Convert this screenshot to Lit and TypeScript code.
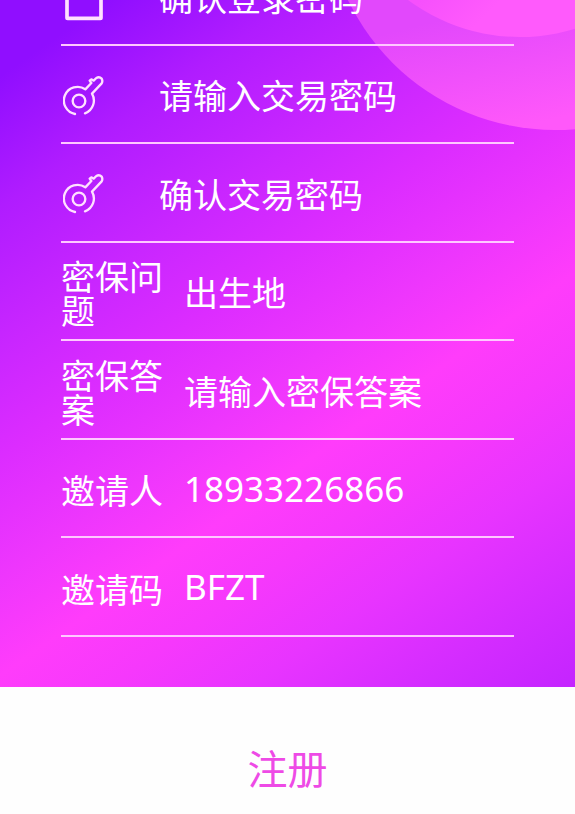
import { LitElement, html, svg, css } from "lit";
import { customElement } from "lit/decorators.js";

const lockIcon = svg`<rect x="12" y="42" width="102" height="85" rx="2" stroke-width="11" />
  <path d="M34 42V28a29 29 0 0 1 58 0V42" stroke-width="8" />`;

const keyIcon = svg`<g stroke-width="7" stroke-linecap="round" stroke-linejoin="round">
  <circle cx="48" cy="78" r="19" />
  <path d="M36 117A41 41 0 1 1 67 43L85 24L80 17L85 13L92 17L100 9Q109 4 116 11Q120 18 116 25L87 56A41 41 0 0 1 66 115" />
</g>`;

@customElement("app-root")
export class AppRoot extends LitElement {
  static styles = css`
    :host {
      display: block;
      min-height: 100vh;
      background: #fefefe;
      color: #fff;
      font-family: "Noto Sans", "Noto Sans CJK SC", sans-serif;
    }
    .panel {
      position: relative;
      overflow: hidden;
      padding: 0 61px 50px;
      background: linear-gradient(
        145deg,
        #900eff 0%,
        #900eff 7%,
        #b01cff 19%,
        #c926ff 32%,
        #dc2cff 42%,
        #ee36fd 53%,
        #ff3cfb 62%,
        #f638fc 70%,
        #e834ff 79%,
        #d42cff 90%,
        #c424ff 100%
      );
    }
    .circles {
      position: absolute;
      top: 0;
      right: 0;
      width: 235px;
      height: 140px;
    }
    .fields {
      position: relative;
      display: grid;
      grid-template-columns: minmax(0, 1fr);
      grid-auto-rows: 1fr;
      min-height: 690px;
      margin-top: -53px;
    }
    .row {
      box-sizing: border-box;
      display: flex;
      align-items: center;
      gap: 20px;
      padding-top: 4px;
      border-bottom: 2px solid #ffc8ff;
    }
    .label {
      flex: none;
      width: 103px;
      font-size: 34px;
      line-height: 34px;
      font-family: "Noto Sans CJK SC", sans-serif;
    }
    .label.symbol {
      width: 78px;
    }
    .icon {
      display: block;
      width: 42px;
      height: 46px;
      margin: 4px 0 0 2px;
      fill: none;
      stroke: #ffe0ff;
    }
    .control {
      box-sizing: border-box;
      flex: 1;
      min-width: 0;
      height: 56px;
      padding: 0 0 2px;
      border: 0;
      outline: 0;
      background: none;
      color: inherit;
      font-family: "Noto Sans CJK SC", sans-serif;
      font-size: 34px;
      appearance: none;
    }
    .control.latin {
      padding-bottom: 4px;
      font-family: "Noto Sans", sans-serif;
      font-size: 35px;
    }
    .control::placeholder {
      color: #fff;
      opacity: 1;
    }
    .submit {
      display: block;
      width: 100%;
      padding: 50px 0 16px;
      border: 0;
      background: none;
      color: #ee4ae6;
      font-family: "Noto Sans CJK SC", sans-serif;
      font-size: 40px;
      line-height: 60px;
    }
  `;

  render() {
    return html`
      <form>
        <div class="panel">
          <svg class="circles" viewBox="0 0 235 140" aria-hidden="true">
            <defs>
              <linearGradient id="outer" gradientUnits="userSpaceOnUse" x1="140" y1="10" x2="170" y2="130">
                <stop offset="0" stop-color="#e248fc" />
                <stop offset="1" stop-color="#ff58fa" />
              </linearGradient>
              <linearGradient id="inner" gradientUnits="userSpaceOnUse" x1="80" y1="0" x2="120" y2="40">
                <stop offset="0" stop-color="#f650fc" />
                <stop offset="1" stop-color="#ff5afc" />
              </linearGradient>
            </defs>
            <circle cx="215" cy="-100" r="230" fill="url(#outer)" />
            <circle cx="180" cy="-151" r="188" fill="url(#inner)" />
          </svg>
          <div class="fields">
            <div class="row">
              <label class="label symbol" for="login2"><svg class="icon" viewBox="0 0 126 138">${lockIcon}</svg></label>
              <input class="control" id="login2" type="password" placeholder="确认登录密码" aria-label="确认登录密码" />
            </div>
            <div class="row">
              <label class="label symbol" for="trade"><svg class="icon" viewBox="0 0 126 138">${keyIcon}</svg></label>
              <input class="control" id="trade" type="password" placeholder="请输入交易密码" aria-label="请输入交易密码" />
            </div>
            <div class="row">
              <label class="label symbol" for="trade2"><svg class="icon" viewBox="0 0 126 138">${keyIcon}</svg></label>
              <input class="control" id="trade2" type="password" placeholder="确认交易密码" aria-label="确认交易密码" />
            </div>
            <div class="row">
              <label class="label" for="question">密保问题</label>
              <select class="control" id="question"><option>出生地</option></select>
            </div>
            <div class="row">
              <label class="label" for="answer">密保答案</label>
              <input class="control" id="answer" type="text" placeholder="请输入密保答案" />
            </div>
            <div class="row">
              <label class="label" for="inviter">邀请人</label>
              <input class="control latin" id="inviter" type="text" value="18933226866" />
            </div>
            <div class="row">
              <label class="label" for="code">邀请码</label>
              <input class="control latin" id="code" type="text" value="BFZT" />
            </div>
          </div>
        </div>
        <button class="submit" type="button">注册</button>
      </form>
    `;
  }
}
